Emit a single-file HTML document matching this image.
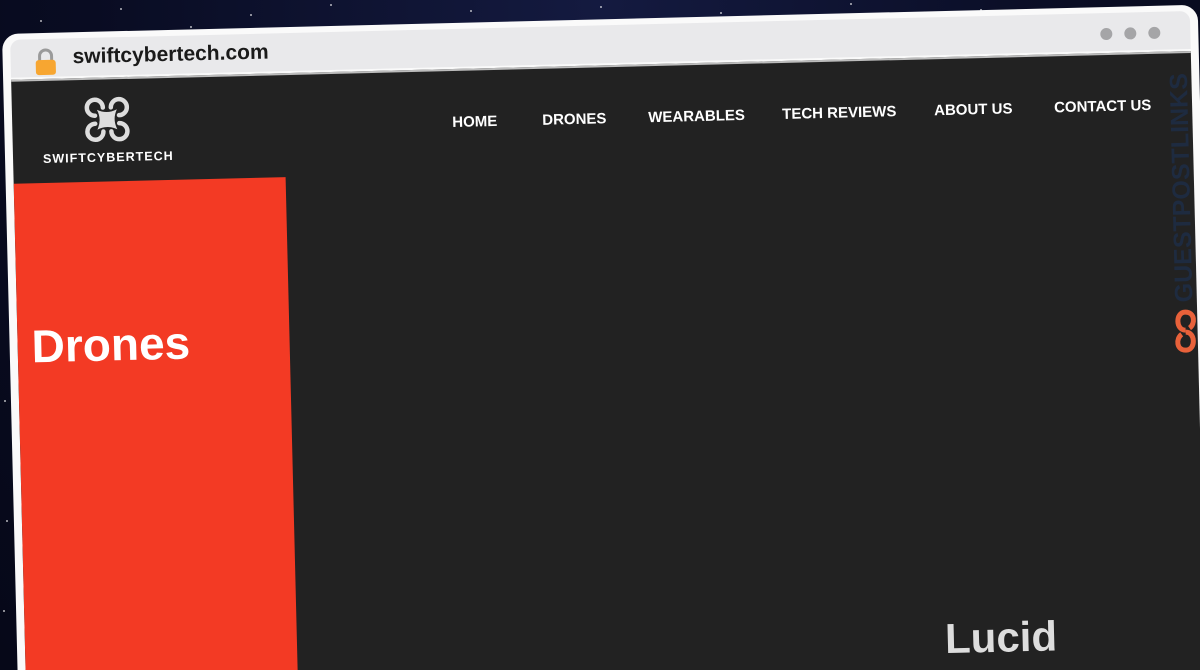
<!DOCTYPE html>
<html><head><meta charset="utf-8">
<style>
html,body{margin:0;padding:0;width:1200px;height:670px;overflow:hidden;background:#0a0d26;font-family:"Liberation Sans",sans-serif;}
.wrap{position:relative;width:1200px;height:670px;overflow:hidden}
.bg{position:absolute;inset:0;background:radial-gradient(ellipse at 50% 0%,#141a40 0%,#090c22 60%,#060818 100%);}
.star{position:absolute;width:2px;height:2px;background:#fff;border-radius:50%;opacity:.7}
.win{position:absolute;left:2px;top:34px;width:1196px;height:680px;transform:rotate(-1.4deg);transform-origin:0 0;background:#fafafa;border-radius:16px;}
.bar{position:absolute;left:8px;top:6px;right:8px;height:38px;background:#e9e9eb;border-radius:10px 10px 0 0;}
.url{position:absolute;left:62px;top:7px;font-size:21px;font-weight:bold;color:#1a1a1a;}
.lock{position:absolute;left:22px;top:9px}
.dots{position:absolute;right:30px;top:14px}
.dots span{display:inline-block;width:12px;height:12px;border-radius:50%;background:#a5a5a7;margin-left:12px}
.content{position:absolute;left:8px;top:46px;right:8px;bottom:0;background:#222;border-top:2px solid #bcbcbc;overflow:hidden}
.red{position:absolute;left:0;top:102px;width:272px;height:640px;background:#f33a24}
.drones{position:absolute;left:14px;top:136px;font-size:46px;font-weight:bold;color:#fff;}
.lucid{position:absolute;left:920px;top:556px;font-size:42px;font-weight:bold;color:#ddd}
.nav{position:absolute;top:43px;font-size:15px;font-weight:bold;color:#fff}
.logo{position:absolute;left:30px;top:14px;text-align:center;width:130px}
.logo .t{font-size:12.5px;font-weight:bold;color:#fff;letter-spacing:1px;margin-top:0px}
.wm{position:absolute;left:1148px;top:0px;width:40px;height:300px}
</style></head><body><div class="wrap">
<div class="bg"></div>
<div class="star" style="left:40px;top:20px"></div><div class="star" style="left:120px;top:8px"></div>
<div class="star" style="left:250px;top:14px"></div><div class="star" style="left:330px;top:4px"></div>
<div class="star" style="left:470px;top:10px"></div><div class="star" style="left:600px;top:6px"></div>
<div class="star" style="left:720px;top:12px"></div><div class="star" style="left:850px;top:3px"></div>
<div class="star" style="left:980px;top:9px"></div><div class="star" style="left:190px;top:26px"></div>
<div class="star" style="left:4px;top:400px"></div><div class="star" style="left:6px;top:520px"></div>
<div class="star" style="left:3px;top:610px"></div>
<div class="win">
  <div class="bar">
    <svg class="lock" width="26" height="28" viewBox="0 0 26 28"><path d="M7 13V8a6 6 0 0 1 12 0v5" fill="none" stroke="#9a9a9a" stroke-width="3"/><rect x="3" y="12" width="20" height="15" rx="3" fill="#f7a631"/></svg>
    <div class="url">swiftcybertech.com</div>
    <div class="dots"><span></span><span></span><span></span></div>
  </div>
  <div class="content">
    <div class="logo">
      <svg width="52" height="52" viewBox="0 0 52 52">
        <g fill="none" stroke="#ddd" stroke-width="4.5" stroke-linecap="round">
          <path d="M14 22 A8 8 0 1 1 22 14"/>
          <path d="M30 14 A8 8 0 1 1 38 22"/>
          <path d="M14 30 A8 8 0 1 0 22 38"/>
          <path d="M30 38 A8 8 0 1 0 38 30"/>
        </g>
        <path d="M16 16 Q26 21 36 16 Q31 26 36 36 Q26 31 16 36 Q21 26 16 16Z" fill="#ddd"/>
      </svg>
      <div class="t">SWIFTCYBERTECH</div>
    </div>
    <div class="nav" style="left:440px">HOME</div>
    <div class="nav" style="left:530px">DRONES</div>
    <div class="nav" style="left:636px">WEARABLES</div>
    <div class="nav" style="left:770px">TECH REVIEWS</div>
    <div class="nav" style="left:922px">ABOUT US</div>
    <div class="nav" style="left:1042px">CONTACT US</div>
    <div class="red"><div class="drones">Drones</div></div>
    <div class="lucid">Lucid</div>
    <div class="wm">
      <div style="position:absolute;left:-105px;top:120px;width:250px;transform:rotate(-90deg);font-size:25px;font-weight:bold;color:#1e2b40;text-align:center">GUESTPOSTLINKS</div>
      <svg style="position:absolute;left:8px;top:255px" width="24" height="46" viewBox="0 0 24 46"><g fill="none" stroke="#e8613a" stroke-width="5"><path d="M12 22 C2 22 2 4 12 4 C22 4 22 16 16 20"/><path d="M12 24 C22 24 22 42 12 42 C2 42 2 30 8 26"/></g></svg>
    </div>
  </div>
</div>
</div></body></html>
